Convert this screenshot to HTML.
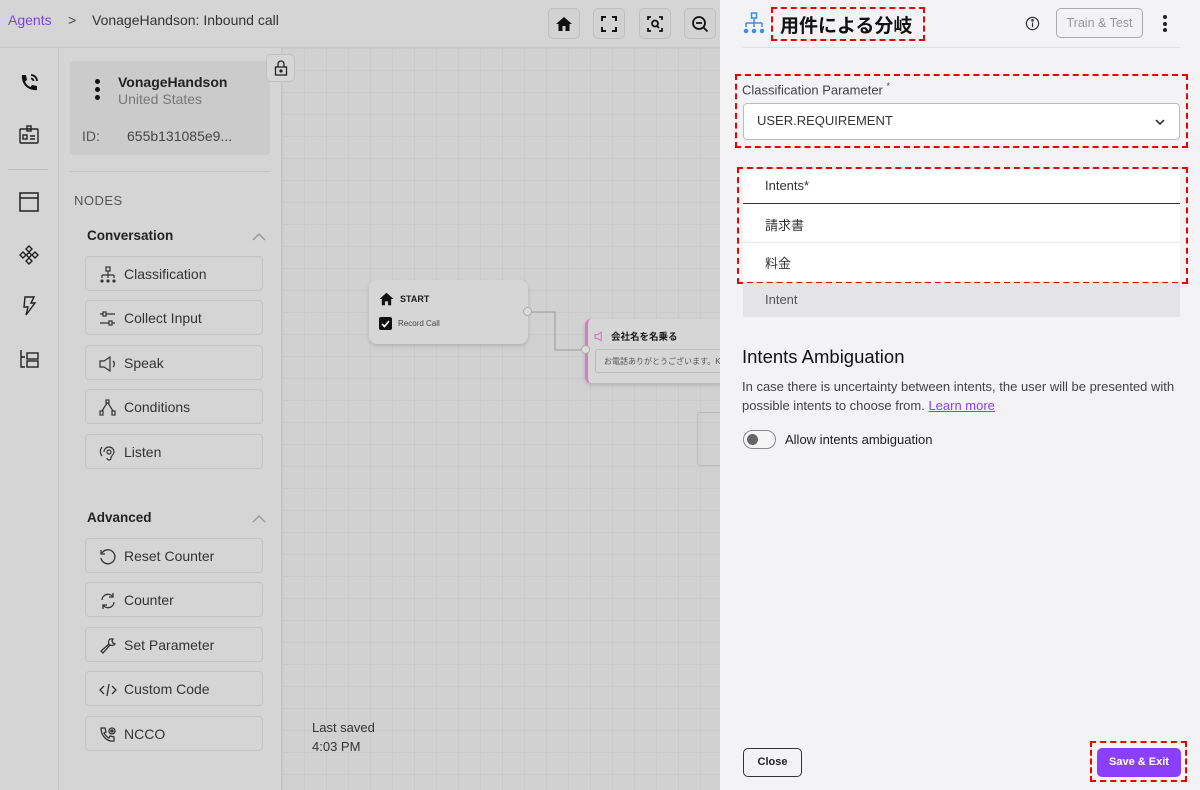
<!DOCTYPE html>
<html><head><meta charset="utf-8"><style>
*{box-sizing:border-box;margin:0;padding:0}
body{width:1200px;height:790px;overflow:hidden;position:relative;font-family:"Liberation Sans","Noto Sans CJK JP",sans-serif;background:#d3d3d3;color:#1a1a1a}
.top{position:absolute;left:0;top:0;width:720px;height:48px;background:#d5d5d5;border-bottom:1px solid #c6c6c6}
.rail{position:absolute;left:0;top:48px;width:59px;height:742px;background:#d5d5d5;border-right:1px solid #c6c6c6}
.side{position:absolute;left:59px;top:48px;width:223px;height:742px;background:#d5d5d5;border-right:1px solid #c3c3c3}
.canvas{position:absolute;left:282px;top:48px;width:438px;height:742px;background-color:#d1d1d1;background-image:linear-gradient(#cacaca 1px,transparent 1px),linear-gradient(90deg,#cacaca 1px,transparent 1px);background-size:22px 22px}
.tb{position:absolute;top:8px;width:32px;height:31px;border:1px solid #c0c0c0;border-radius:5px;background:#d2d2d2;display:flex;align-items:center;justify-content:center}
.nb{position:absolute;left:26px;width:178px;height:35px;border:1px solid #c4c4c4;border-radius:4px;background:#d5d5d5;font-size:14px;color:#333;display:flex;align-items:center;padding-left:38px}
.nb svg{position:absolute;left:13px;top:9px}
.ri{position:absolute;left:18px}
.panel{position:absolute;left:720px;top:0;width:480px;height:790px;background:#f3f3f6}
.red{position:absolute;border:2px dashed #e00}
</style></head><body>
<div class="top">
 <div style="position:absolute;left:8px;top:12px;font-size:14px;color:#7a45d9">Agents</div>
 <div style="position:absolute;left:68px;top:12px;font-size:14px;color:#444">&gt;</div>
 <div style="position:absolute;left:92px;top:12px;font-size:14px;color:#333">VonageHandson: Inbound call</div>
 <div class="tb" style="left:548px"><svg width="18" height="18" viewBox="0 0 18 18"><path d="M9 2L1 9h2.5v7h4v-5h3v5h4V9H17z" fill="#111"/></svg></div>
 <div class="tb" style="left:593px"><svg width="18" height="18" viewBox="0 0 18 18" fill="none" stroke="#111" stroke-width="2"><path d="M2 6V2h4M12 2h4v4M16 12v4h-4M6 16H2v-4"/></svg></div>
 <div class="tb" style="left:639px"><svg width="18" height="18" viewBox="0 0 18 18" fill="none" stroke="#111" stroke-width="1.8"><path d="M2 5V2h3M13 2h3v3M16 13v3h-3M5 16H2v-3"/><circle cx="9" cy="8.5" r="3"/><path d="M11 11l2 2"/></svg></div>
 <div class="tb" style="left:684px"><svg width="18" height="18" viewBox="0 0 18 18" fill="none" stroke="#111" stroke-width="1.8"><circle cx="8" cy="8" r="6"/><path d="M5 8h6M12.5 12.5l4 4"/></svg></div>
</div>
<div class="rail">
 <svg class="ri" style="top:24px" width="22" height="22" viewBox="0 0 22 22"><path d="M4 3l4 0 1 5-2 1.5c1 2.5 3 4.5 5.5 5.5L14 13l5 1v4c-9 1-16-6-15-15z" fill="#111"/><path d="M13 3a6 6 0 0 1 6 6M13 6.5a2.5 2.5 0 0 1 2.5 2.5" stroke="#111" stroke-width="1.8" fill="none"/></svg>
 <svg class="ri" style="top:76px" width="22" height="22" viewBox="0 0 22 22" fill="none" stroke="#222" stroke-width="1.4"><rect x="2" y="5" width="18" height="14" rx="1"/><rect x="9" y="2" width="4" height="5"/><rect x="5" y="11" width="4" height="4"/><path d="M12 12h5M12 15h5"/></svg>
 <div style="position:absolute;left:8px;top:121px;width:40px;border-top:1px solid #c0c0c0"></div>
 <svg class="ri" style="top:143px" width="22" height="22" viewBox="0 0 22 22" fill="none" stroke="#222" stroke-width="1.5"><rect x="2" y="2" width="18" height="18"/><path d="M2 7h18"/></svg>
 <svg class="ri" style="top:196px" width="22" height="22" viewBox="0 0 22 22" fill="none" stroke="#222" stroke-width="1.4"><circle cx="11" cy="11" r="2"/><path d="M11 2l3 3-3 3-3-3zM11 14l3 3-3 3-3-3zM2 11l3-3 3 3-3 3zM14 11l3-3 3 3-3 3z"/></svg>
 <svg class="ri" style="top:247px" width="22" height="22" viewBox="0 0 22 22" fill="none" stroke="#222" stroke-width="1.4"><path d="M7 2h9l-3 6h4L8 20l2-8H6z"/></svg>
 <svg class="ri" style="top:300px" width="22" height="22" viewBox="0 0 22 22" fill="none" stroke="#222" stroke-width="1.4"><path d="M3 2v17h4M3 9h4"/><rect x="9" y="5" width="11" height="6"/><rect x="9" y="13" width="11" height="6"/></svg>
</div>
<div class="side">
 <div style="position:absolute;left:11px;top:13px;width:200px;height:94px;background:#cbcbcb;border-radius:4px">
  <div style="position:absolute;left:25px;top:18px;width:5px;height:24px"><div style="width:5px;height:5px;border-radius:50%;background:#111;margin-bottom:3px"></div><div style="width:5px;height:5px;border-radius:50%;background:#111;margin-bottom:3px"></div><div style="width:5px;height:5px;border-radius:50%;background:#111"></div></div>
  <div style="position:absolute;left:48px;top:13px;font-size:14px;font-weight:bold;color:#222">VonageHandson</div>
  <div style="position:absolute;left:48px;top:30px;font-size:14px;color:#777">United States</div>
  <div style="position:absolute;left:12px;top:67px;font-size:14px;color:#555">ID:</div>
  <div style="position:absolute;left:57px;top:67px;font-size:14px;color:#444">655b131085e9...</div>
 </div>
 <div style="position:absolute;left:11px;top:123px;width:200px;border-top:1px solid #c2c2c2"></div>
 <div style="position:absolute;left:15px;top:145px;font-size:13px;color:#555;letter-spacing:.5px">NODES</div>
 <div style="position:absolute;left:28px;top:180px;font-size:13.5px;font-weight:bold;color:#222">Conversation</div>
 <svg style="position:absolute;left:192px;top:184px" width="16" height="10"><path d="M2 8l6-6 6 6" stroke="#999" fill="none" stroke-width="1.5"/></svg>
 <div class="nb" style="top:208px"><svg width="18" height="18" viewBox="0 0 18 18" fill="none" stroke="#333" stroke-width="1.2"><rect x="7" y="1" width="4" height="4"/><path d="M9 5v4M3 9h12M3 9v3M9 9v3M15 9v3"/><circle cx="3" cy="15" r="1" fill="#333"/><circle cx="9" cy="15" r="1" fill="#333"/><circle cx="15" cy="15" r="1" fill="#333"/></svg>Classification</div>
 <div class="nb" style="top:252px"><svg width="18" height="18" viewBox="0 0 18 18" fill="none" stroke="#333" stroke-width="1.2"><rect x="4" y="2" width="3" height="4"/><rect x="10" y="11" width="3" height="4"/><path d="M1 4h3M7 4h9M1 13h9M13 13h3"/></svg>Collect Input</div>
 <div class="nb" style="top:297px"><svg width="18" height="18" viewBox="0 0 18 18" fill="none" stroke="#333" stroke-width="1.2"><path d="M1 6h4l6-4v14l-6-4H1z"/><path d="M14 6a4 4 0 0 1 0 6"/></svg>Speak</div>
 <div class="nb" style="top:341px"><svg width="18" height="18" viewBox="0 0 18 18" fill="none" stroke="#333" stroke-width="1.2"><rect x="7" y="1" width="3" height="3"/><path d="M8 4L3 12M9 4l5 8"/><rect x="1" y="12" width="3" height="4"/><rect x="13" y="12" width="3" height="4"/></svg>Conditions</div>
 <div class="nb" style="top:386px"><svg width="18" height="18" viewBox="0 0 18 18" fill="none" stroke="#333" stroke-width="1.2"><path d="M5 8a5 5 0 0 1 10 0c0 3-3 3-3 6a2 2 0 0 1-4 0"/><circle cx="10" cy="8" r="2"/><path d="M3 3a7 7 0 0 0 0 9"/></svg>Listen</div>
 <div style="position:absolute;left:28px;top:462px;font-size:13.5px;font-weight:bold;color:#222">Advanced</div>
 <svg style="position:absolute;left:192px;top:466px" width="16" height="10"><path d="M2 8l6-6 6 6" stroke="#999" fill="none" stroke-width="1.5"/></svg>
 <div class="nb" style="top:490px"><svg width="18" height="18" viewBox="0 0 18 18" fill="none" stroke="#333" stroke-width="1.3"><path d="M3 5a7 7 0 1 1-1 5"/><path d="M2 2v4h4"/></svg>Reset Counter</div>
 <div class="nb" style="top:534px"><svg width="18" height="18" viewBox="0 0 18 18" fill="none" stroke="#333" stroke-width="1.3"><path d="M3 8a6 6 0 0 1 11-3M15 10a6 6 0 0 1-11 3"/><path d="M14 1v4h-4M4 17v-4h4"/></svg>Counter</div>
 <div class="nb" style="top:579px"><svg width="18" height="18" viewBox="0 0 18 18" fill="none" stroke="#333" stroke-width="1.3"><path d="M11 2a4 4 0 0 0-1 5L2 14l2 2 7-8a4 4 0 0 0 5-1l-2-1-1-2 1-2z"/></svg>Set Parameter</div>
 <div class="nb" style="top:623px"><svg width="18" height="18" viewBox="0 0 18 18" fill="none" stroke="#333" stroke-width="1.3"><path d="M5 5L1 9l4 4M13 5l4 4-4 4M10 3L8 15"/></svg>Custom Code</div>
 <div class="nb" style="top:668px"><svg width="18" height="18" viewBox="0 0 18 18" fill="none" stroke="#333" stroke-width="1.3"><path d="M2 2h4l1 4-2 1c1 2 3 4 5 5l1-2 4 1v4C8 16 2 10 2 2z"/><circle cx="13" cy="5" r="3"/><circle cx="13" cy="5" r="1" fill="#333"/></svg>NCCO</div>
</div>
<div class="canvas">
 <svg style="position:absolute;left:0;top:0" width="438" height="400"><path d="M246 264h27v38h30" stroke="#999" fill="none"/></svg>
 <div style="position:absolute;left:87px;top:232px;width:159px;height:64px;background:#d6d6d6;border-radius:8px;box-shadow:0 2px 4px rgba(0,0,0,.15)">
  <svg style="position:absolute;left:10px;top:12px" width="15" height="14" viewBox="0 0 18 18"><path d="M9 1L0 9h3v8h4v-5h4v5h4V9h3z" fill="#111"/></svg>
  <div style="position:absolute;left:31px;top:14px;font-size:9px;font-weight:bold">START</div>
  <div style="position:absolute;left:10px;top:37px;width:13px;height:13px;background:#111;border-radius:2px"><svg width="13" height="13"><path d="M3 7l2.5 2.5L10 4" stroke="#fff" stroke-width="1.6" fill="none"/></svg></div>
  <div style="position:absolute;left:29px;top:39px;font-size:8px;color:#444">Record Call</div>
  <div style="position:absolute;left:154px;top:27px;width:9px;height:9px;border-radius:50%;background:#ddd;border:1px solid #aaa"></div>
 </div>
 <div style="position:absolute;left:303px;top:271px;width:140px;height:64px;background:#d6d6d6;border-radius:6px;border-left:3px solid #d67bc6;box-shadow:0 2px 4px rgba(0,0,0,.15)">
  <svg style="position:absolute;left:6px;top:12px" width="12" height="11" viewBox="0 0 18 18" fill="none" stroke="#d67bc6" stroke-width="2"><path d="M1 6h4l6-4v14l-6-4H1z"/></svg>
  <div style="position:absolute;left:23px;top:10px;font-size:9.5px;font-weight:bold">会社名を名乗る</div>
  <div style="position:absolute;left:7px;top:30px;width:140px;height:24px;border:1px solid #bbb;border-radius:3px;font-size:8px;color:#555;padding:6px 8px;white-space:nowrap;overflow:hidden">お電話ありがとうございます。K.</div>
  <div style="position:absolute;left:-7px;top:26px;width:9px;height:9px;border-radius:50%;background:#ddd;border:1px solid #aaa"></div>
 </div>
 <div style="position:absolute;left:415px;top:364px;width:25px;height:54px;border:1px solid #bbb;border-radius:3px"></div>
 <div style="position:absolute;left:30px;top:672px;font-size:13px;color:#333">Last saved</div>
 <div style="position:absolute;left:30px;top:691px;font-size:13px;color:#333">4:03 PM</div>
</div>
<div style="position:absolute;left:266px;top:54px;width:29px;height:28px;border:1px solid #c2c2c2;border-radius:5px;background:#d6d6d6"><svg style="position:absolute;left:7px;top:5px" width="14" height="16" viewBox="0 0 14 16" fill="none" stroke="#222" stroke-width="1.3"><rect x="1.5" y="7" width="11" height="8"/><path d="M4 7V4a3 3 0 0 1 6 0v3"/><circle cx="7" cy="11" r="1" fill="#222"/></svg></div>
<div class="panel">
 <svg style="position:absolute;left:23px;top:12px" width="22" height="22" viewBox="0 0 22 22" fill="none" stroke="#3b8ee8" stroke-width="1.5"><rect x="8.5" y="1" width="5" height="5"/><path d="M11 6v5M3 11h16M3 11v4M11 11v4M19 11v4"/><circle cx="3" cy="19" r="1.5" fill="#3b8ee8"/><circle cx="11" cy="19" r="1.5" fill="#3b8ee8"/><circle cx="19" cy="19" r="1.5" fill="#3b8ee8"/></svg>
 <div class="red" style="left:51px;top:7px;width:154px;height:34px"></div>
 <div style="position:absolute;left:60px;top:11px;font-size:19px;font-weight:bold;color:#111">用件による分岐</div>
 <svg style="position:absolute;left:305px;top:16px" width="15" height="15" viewBox="0 0 16 16" fill="none" stroke="#333" stroke-width="1.3"><circle cx="8" cy="8" r="6.5"/><path d="M8 7v5"/><circle cx="8" cy="4.6" r=".8" fill="#333"/></svg>
 <div style="position:absolute;left:336px;top:8px;width:87px;height:30px;border:1px solid #aaa;border-radius:5px;font-size:12.5px;color:#999;text-align:center;line-height:28px">Train &amp; Test</div>
 <div style="position:absolute;left:443px;top:15px;width:4px"><div style="width:4px;height:4px;border-radius:50%;background:#222;margin-bottom:2.5px"></div><div style="width:4px;height:4px;border-radius:50%;background:#222;margin-bottom:2.5px"></div><div style="width:4px;height:4px;border-radius:50%;background:#222"></div></div>
 <div style="position:absolute;left:23px;top:47px;width:437px;border-top:1px solid #e0e0e3"></div>
 <div class="red" style="left:15px;top:74px;width:453px;height:74px"></div>
 <div style="position:absolute;left:22px;top:81px;font-size:13px;color:#444">Classification Parameter <sup style="font-size:9px">*</sup></div>
 <div style="position:absolute;left:23px;top:103px;width:437px;height:37px;border:1px solid #bbb;border-radius:4px;background:#fff;font-size:13px;color:#333;padding:9px 13px">USER.REQUIREMENT
  <svg style="position:absolute;right:14px;top:15px" width="10" height="7"><path d="M1 1l4 4 4-4" stroke="#222" stroke-width="1.5" fill="none"/></svg></div>
 <div class="red" style="left:17px;top:167px;width:451px;height:117px"></div>
 <div style="position:absolute;left:23px;top:169px;width:437px;height:112px;background:#fff">
  <div style="position:absolute;left:22px;top:9px;font-size:13px;color:#333">Intents*</div>
  <div style="position:absolute;left:0;top:34px;width:437px;border-top:1.5px solid #333"></div>
  <div style="position:absolute;left:22px;top:46px;font-size:13px;color:#333">請求書</div>
  <div style="position:absolute;left:0;top:73px;width:437px;border-top:1px solid #e8e8e8"></div>
  <div style="position:absolute;left:22px;top:84px;font-size:13px;color:#333">料金</div>
 </div>
 <div style="position:absolute;left:23px;top:283px;width:437px;height:34px;background:#e4e4e6;font-size:13px;color:#555;padding:9px 22px">Intent</div>
 <div style="position:absolute;left:22px;top:346px;font-size:18.5px;color:#111">Intents Ambiguation</div>
 <div style="position:absolute;left:22px;top:377px;width:450px;font-size:13px;color:#444;line-height:19px">In case there is uncertainty between intents, the user will be presented with possible intents to choose from. <span style="color:#8a3ffc;text-decoration:underline">Learn more</span></div>
 <div style="position:absolute;left:23px;top:430px;width:33px;height:19px;border:1px solid #888;border-radius:10px;background:#f5f5f5"><div style="position:absolute;left:3px;top:3px;width:11px;height:11px;border-radius:50%;background:#666"></div></div>
 <div style="position:absolute;left:65px;top:432px;font-size:13px;color:#222">Allow intents ambiguation</div>
 <div style="position:absolute;left:23px;top:748px;width:59px;height:29px;border:1px solid #333;border-radius:5px;font-size:11px;font-weight:bold;text-align:center;line-height:27px;color:#222">Close</div>
 <div class="red" style="left:370px;top:741px;width:97px;height:41px"></div>
 <div style="position:absolute;left:377px;top:748px;width:84px;height:29px;background:#8a3ffc;border-radius:5px;font-size:11px;font-weight:bold;text-align:center;line-height:29px;color:#fff">Save &amp; Exit</div>
</div>
</body></html>
